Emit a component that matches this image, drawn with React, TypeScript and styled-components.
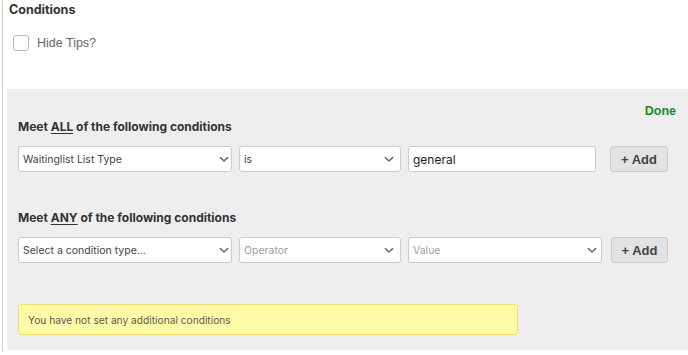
import React from "react";
import styled, { createGlobalStyle } from "styled-components";

const Global = createGlobalStyle`
  html, body { margin: 0; padding: 0; background: #fff; }
  body { font-family: "Liberation Sans", Arial, sans-serif; }
  * { box-sizing: border-box; }
`;

const Frame = styled.div`
  margin-left: 2px;
  width: 686px;
  height: 352px;
  border-left: 1px solid #cfcfcf;
  display: flex;
  flex-direction: column;
`;

const Title = styled.div`
  font-family: Inter, "Liberation Sans", sans-serif;
  font-weight: 700;
  font-size: 12.5px;
  line-height: 16px;
  color: #333;
  padding: 2px 0 0 6px;
`;

const TipRow = styled.label`
  display: flex;
  align-items: center;
  gap: 8px;
  margin: 17px 0 0 10px;
  height: 16px;
  font-size: 12.5px;
  color: #666;
`;

const Box = styled.span`
  width: 16px;
  height: 16px;
  border: 1px solid #b9b9b9;
  border-radius: 3px;
  background: #fff;
`;

const Panel = styled.div`
  margin: 38px 0 0 4px;
  height: 261px;
  background: #eeeeee;
  padding: 0 0 0 11px;
  display: flex;
  flex-direction: column;
`;

const Done = styled.div`
  align-self: flex-end;
  margin: 15px 12px 0 0;
  font-weight: 700;
  font-size: 12.5px;
  line-height: 14px;
  color: #1e8a1e;
`;

const SectionTitle = styled.div<{ $top: number }>`
  margin-top: ${(p) => p.$top}px;
  font-family: Inter, "Liberation Sans", sans-serif;
  font-weight: 700;
  font-size: 12px;
  line-height: 16px;
  color: #333;
  u { text-decoration-thickness: 1px; text-underline-offset: 2px; }
`;

const Row = styled.div`
  margin-top: 11px;
  display: flex;
  align-items: center;
  height: 26px;
`;

const Field = styled.div<{ $w: number; $gap: number; $pr?: number }>`
  width: ${(p) => p.$w}px;
  margin-right: ${(p) => p.$gap}px;
  height: 26px;
  background: #fff;
  border: 1px solid #cccccc;
  border-radius: 3px;
  display: flex;
  align-items: center;
  justify-content: space-between;
  padding: 0 ${(p) => p.$pr ?? 6}px 0 4px;
  font-family: Inter, "Liberation Sans", sans-serif;
`;

const FieldText = styled.span<{ $muted?: boolean; $big?: boolean }>`
  font-size: ${(p) => (p.$big ? 12 : 10.5)}px;
  color: ${(p) => (p.$muted ? "#a0a0a0" : p.$big ? "#222" : "#444")};
`;

const AddButton = styled.button<{ $w: number }>`
  width: ${(p) => p.$w}px;
  height: 26px;
  background: #e2e2e2;
  border: 1px solid #cdcdcd;
  border-radius: 3px;
  font-family: "Liberation Sans", Arial, sans-serif;
  font-weight: 700;
  font-size: 13px;
  color: #444;
  padding: 0;
`;

const Notice = styled.div`
  margin-top: 41px;
  width: 500px;
  height: 31px;
  background: #fffba6;
  border: 1px solid #f1de72;
  border-radius: 3px;
  display: flex;
  align-items: center;
  padding-left: 9px;
  font-family: Inter, "Liberation Sans", sans-serif;
  font-size: 10.2px;
  color: #5a5a5a;
`;

const Chevron = () => (
  <svg width="10" height="7" viewBox="0 0 10 7">
    <polyline points="1.4,1.6 5,5 8.6,1.6" fill="none" stroke="#6a6a6a" strokeWidth="1.5" strokeLinecap="round" strokeLinejoin="round" />
  </svg>
);

export default function App() {
  return (
    <>
      <Global />
      <Frame>
        <Title>Conditions</Title>
        <TipRow>
          <Box />
          Hide Tips?
        </TipRow>
        <Panel>
          <Done>Done</Done>
          <SectionTitle $top={1}>
            Meet <u>ALL</u> of the following conditions
          </SectionTitle>
          <Row>
            <Field $w={214} $gap={7} $pr={2}>
              <FieldText>Waitinglist List Type</FieldText>
              <Chevron />
            </Field>
            <Field $w={162} $gap={7}>
              <FieldText>is</FieldText>
              <Chevron />
            </Field>
            <Field $w={188} $gap={14}>
              <FieldText $big>general</FieldText>
            </Field>
            <AddButton $w={58}>+ Add</AddButton>
          </Row>
          <SectionTitle $top={38}>
            Meet <u>ANY</u> of the following conditions
          </SectionTitle>
          <Row>
            <Field $w={214} $gap={7} $pr={2}>
              <FieldText>Select a condition type...</FieldText>
              <Chevron />
            </Field>
            <Field $w={162} $gap={7}>
              <FieldText $muted>Operator</FieldText>
              <Chevron />
            </Field>
            <Field $w={194} $gap={9} $pr={4}>
              <FieldText $muted>Value</FieldText>
              <Chevron />
            </Field>
            <AddButton $w={57}>+ Add</AddButton>
          </Row>
          <Notice>You have not set any additional conditions</Notice>
        </Panel>
      </Frame>
    </>
  );
}
